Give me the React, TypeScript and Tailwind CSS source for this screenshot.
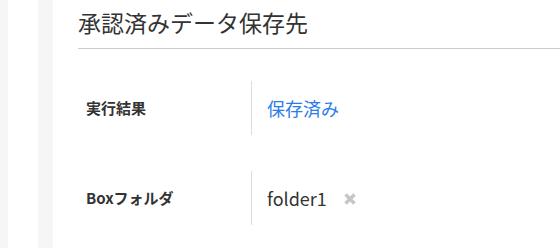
import React from 'react';

const jp = { fontFamily: '"Noto Sans CJK JP", "Noto Sans", sans-serif' };

interface RowProps {
  label: string;
  children: React.ReactNode;
}

function Row({ label, children }: RowProps) {
  return (
    <div className="flex h-[54px] items-center">
      <div className="w-[173px] pl-[8px] text-[15px] font-bold text-[#333]">{label}</div>
      <div className="h-full w-px bg-[#dddddd]" />
      <div className="flex items-center gap-[17px] pl-[15px]">{children}</div>
    </div>
  );
}

export default function App() {
  return (
    <div className="flex h-[248px] w-[560px] bg-white" style={jp}>
      <div className="w-[8px] bg-[#f6f6f6]" />
      <div className="w-[30px] bg-white" />
      <div className="w-[15px] bg-[#f6f6f6]" />
      <main className="flex-1 pl-[25px]">
        <h2 className="border-b border-[#cccccc] pt-[6px] pb-[9px] text-[23px] leading-[33px] font-normal text-[#333]">
          承認済みデータ保存先
        </h2>
        <div className="mt-[32px] flex flex-col gap-[36px]">
          <Row label="実行結果">
            <span className="text-[18px] text-[#2b7de9]">保存済み</span>
          </Row>
          <Row label="Boxフォルダ">
            <span className="text-[18px] text-[#333]">folder1</span>
            <svg width="12" height="12" viewBox="0 0 12 12" className="mt-[1px]">
              <path d="M1.5 1.5 L10.5 10.5 M10.5 1.5 L1.5 10.5" stroke="#c6c6c6" strokeWidth="3.4" />
            </svg>
          </Row>
        </div>
      </main>
    </div>
  );
}
